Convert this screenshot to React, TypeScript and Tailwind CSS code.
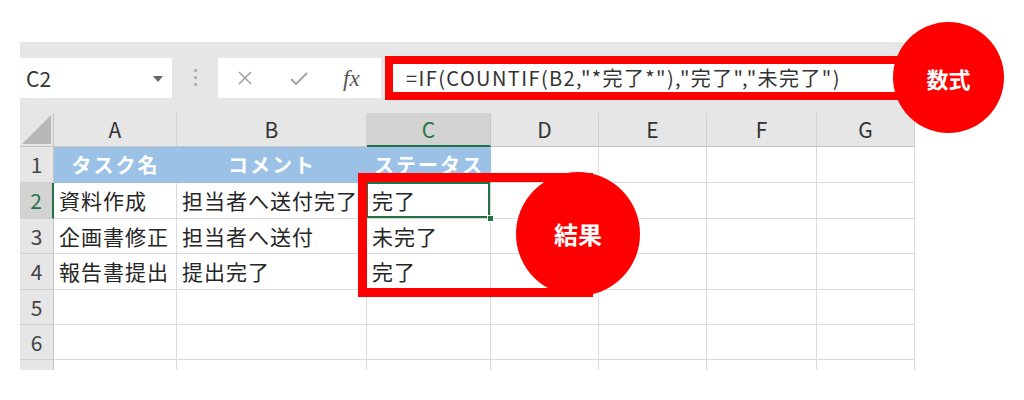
const COLS = ['A', 'B', 'C', 'D', 'E', 'F', 'G']

// シートの中身（1行目は見出し）
const ROWS: string[][] = [
  ['タスク名', 'コメント', 'ステータス'],
  ['資料作成', '担当者へ送付完了', '完了'],
  ['企画書修正', '担当者へ送付', '未完了'],
  ['報告書提出', '提出完了', '完了'],
  [],
  [],
  [],
]

function NameBox() {
  return (
    <div className="relative flex h-[40px] w-[152px] items-center bg-white pl-[6px] text-[21px] leading-none text-[#333]">
      C2
      <svg className="absolute right-[9px] top-[18px]" width="10" height="6" viewBox="0 0 10 6">
        <path d="M0 0h10L5 6z" fill="#666" />
      </svg>
    </div>
  )
}

function FormulaButtons() {
  return (
    <div className="flex h-[40px] w-[163px] items-center bg-white">
      <svg className="ml-[19px]" width="16" height="14" viewBox="0 0 16 14">
        <path d="M2 1l12 12M14 1L2 13" stroke="#9a9a9a" strokeWidth="1.4" fill="none" />
      </svg>
      <svg className="ml-[37px]" width="18" height="13" viewBox="0 0 18 13">
        <path d="M1 7l5 5L17 1" stroke="#a8a8a8" strokeWidth="2.2" fill="none" />
      </svg>
      <span className="ml-[35px] font-['Liberation_Serif',serif] text-[23px] italic leading-none text-[#555]">
        fx
      </span>
    </div>
  )
}

export default function App() {
  return (
    <div className="relative h-[400px] w-[1024px] overflow-hidden bg-white font-['Noto_Sans_CJK_JP','Liberation_Sans',sans-serif]">
      <div className="pl-[20px] pt-[42px]">
        <div className="w-[895px] bg-[#e6e6e6]">
          {/* 名前ボックス・数式バー */}
          <div className="flex h-[71px] items-start pt-[16px]">
            <NameBox />
            <div className="flex w-[46px] flex-col items-center gap-[4px] pt-[11px]">
              <span className="h-[3px] w-[3px] bg-[#b4b4b4]" />
              <span className="h-[3px] w-[3px] bg-[#b4b4b4]" />
              <span className="h-[3px] w-[3px] bg-[#b4b4b4]" />
            </div>
            <FormulaButtons />
            <div className="ml-[4px] flex h-[40px] flex-1 items-center whitespace-nowrap bg-white pl-[21px] text-[20px] leading-none tracking-[1.4px] text-[#333]">
              =IF(COUNTIF(B2,"*完了*"),"完了","未完了")
            </div>
          </div>

          {/* シート */}
          <div className="h-[257px] overflow-hidden bg-white">
            <div className="grid grid-cols-[34px_123px_190px_124px_108px_108px_110px_98px] grid-rows-[34px_36px_36px_35px_36px_35px_35px_35px]">
              <div className="relative border-b border-r border-[#c4c4c4] bg-[#e6e6e6]">
                <svg className="absolute bottom-[2px] right-[2px]" width="29" height="29" viewBox="0 0 29 29">
                  <path d="M29 0V29H0z" fill="#b7b7b7" />
                </svg>
              </div>
              {COLS.map((c) =>
                c === 'C' ? (
                  <div
                    key={c}
                    className="flex items-center justify-center border-b-2 border-r border-b-[#217346] border-r-[#c8c8c8] bg-[#d3d3d3] text-[21px] leading-none text-[#217346]"
                  >
                    {c}
                  </div>
                ) : (
                  <div
                    key={c}
                    className="flex items-center justify-center border-b border-r border-b-[#c4c4c4] border-r-[#d2d2d2] bg-[#e6e6e6] text-[21px] leading-none text-[#333]"
                  >
                    {c}
                  </div>
                ),
              )}

              {ROWS.map((row, i) => (
                <Row key={i} n={i + 1} cells={row} />
              ))}
            </div>
          </div>
        </div>
      </div>

      {/* 注釈：数式 */}
      <div className="absolute left-[385px] top-[56px] h-[44px] w-[520px] border-[8px] border-[#ff0000]" />
      <div className="absolute left-[893px] top-[22px] flex h-[111px] w-[111px] items-center justify-center rounded-full bg-[#ff0000] text-[22px] font-bold leading-none text-white">
        数式
      </div>

      {/* 注釈：結果 */}
      <div className="absolute left-[358px] top-[173px] h-[124px] w-[235px] border-[9px] border-[#ff0000]" />
      <div className="absolute left-[516px] top-[172px] flex h-[124px] w-[124px] items-center justify-center rounded-full bg-[#ff0000] text-[24px] font-bold leading-none text-white">
        結果
      </div>
    </div>
  )
}

function Row({ n, cells }: { n: number; cells: string[] }) {
  const selected = n === 2
  return (
    <>
      {selected ? (
        <div className="flex items-center justify-center border-b border-r-2 border-b-[#d0d0d0] border-r-[#217346] bg-[#d3d3d3] text-[21px] leading-none text-[#217346]">
          {n}
        </div>
      ) : (
        <div className="flex items-center justify-center border-b border-r border-b-[#d0d0d0] border-r-[#c4c4c4] bg-[#e6e6e6] text-[21px] leading-none text-[#444]">
          {n}
        </div>
      )}
      {COLS.map((c, j) => {
        const text = cells[j] ?? ''
        if (n === 1 && j < 3) {
          return (
            <div
              key={c}
              className="flex items-center justify-center whitespace-nowrap bg-[#9bc2e6] text-[20px] font-bold leading-none tracking-[2px] text-white"
            >
              {text}
            </div>
          )
        }
        return (
          <div
            key={c}
            className="relative flex items-center whitespace-nowrap border-b border-r border-[#dadada] pl-[5px] text-[21px] leading-none tracking-[1px] text-[#262626]"
          >
            {text}
            {n === 2 && c === 'C' && (
              <>
                <div className="absolute -left-[1px] -top-[1px] bottom-0 right-0 border-2 border-[#217346]" />
                <div className="absolute -bottom-[4px] -right-[4px] z-10 h-[7px] w-[7px] border border-white bg-[#217346]" />
              </>
            )}
          </div>
        )
      })}
    </>
  )
}
